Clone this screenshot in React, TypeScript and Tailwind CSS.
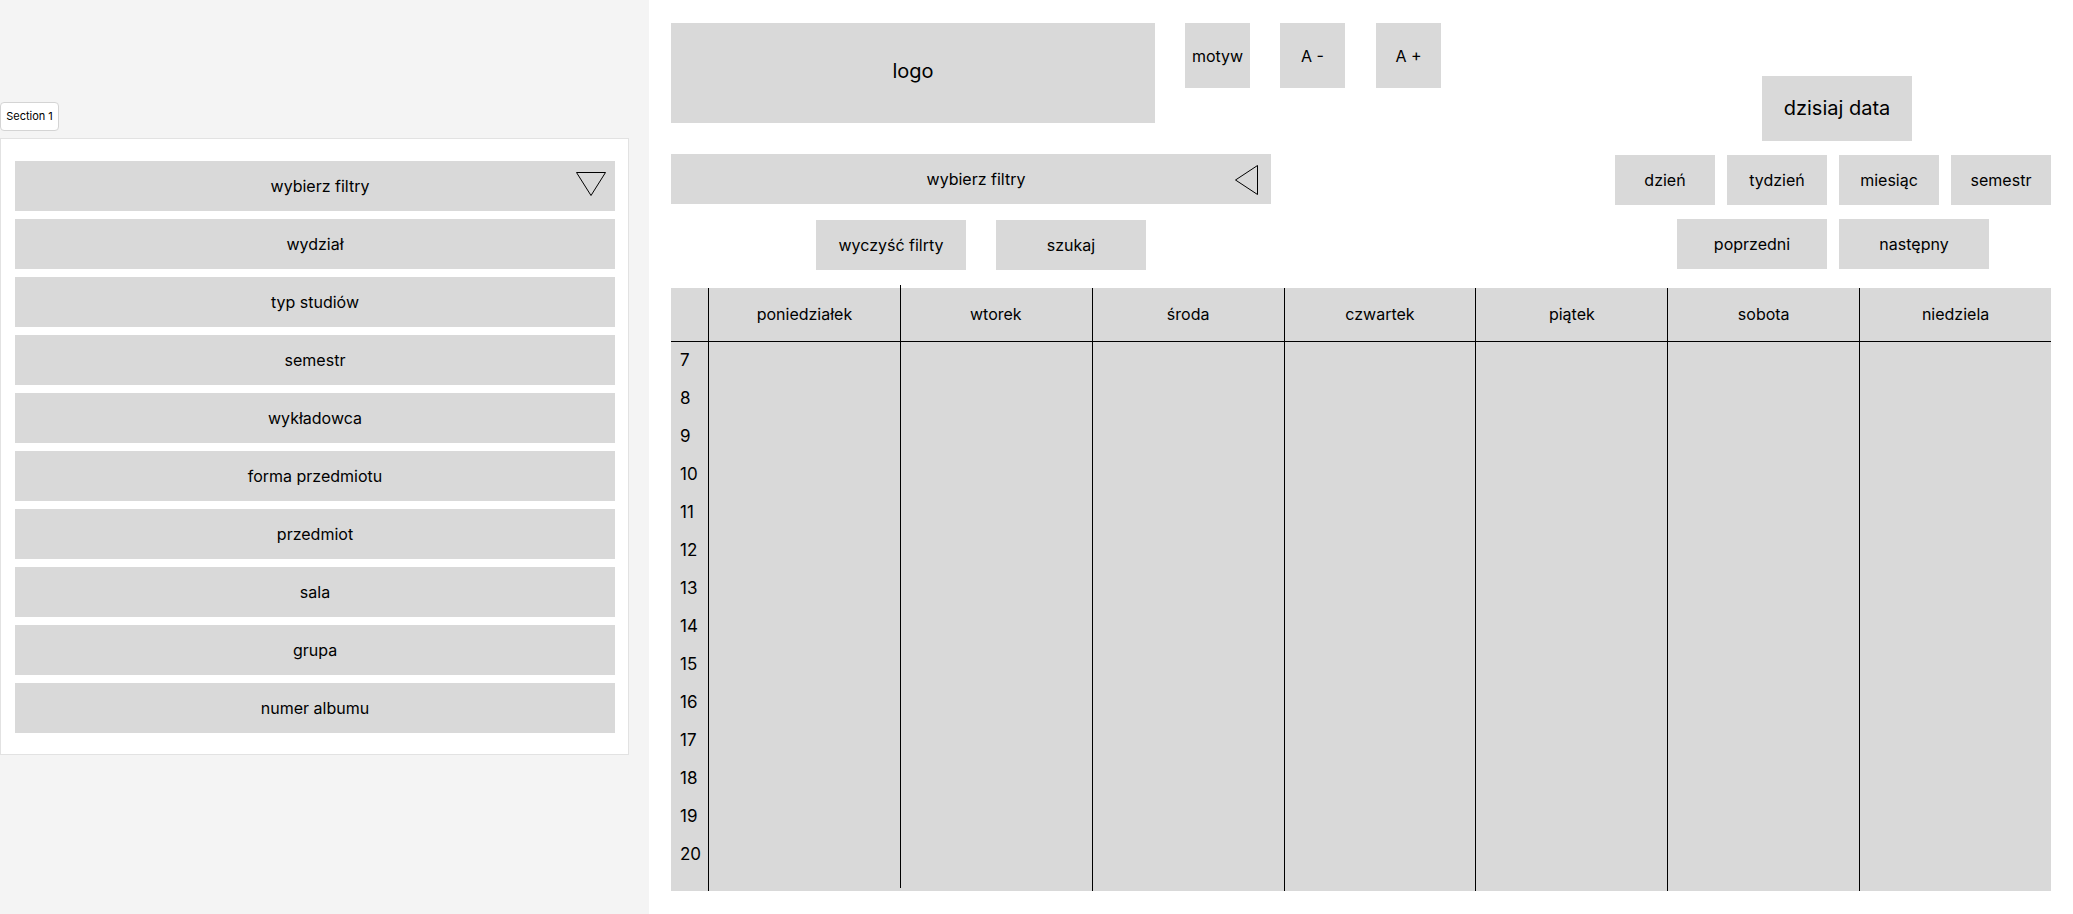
import React from 'react';

const filters = [
    'wydział',
    'typ studiów',
    'semestr',
    'wykładowca',
    'forma przedmiotu',
    'przedmiot',
    'sala',
    'grupa',
    'numer albumu',
];

const days = ['poniedziałek', 'wtorek', 'środa', 'czwartek', 'piątek', 'sobota', 'niedziela'];
const hours = [7, 8, 9, 10, 11, 12, 13, 14, 15, 16, 17, 18, 19, 20];

function TriangleDown() {
    return (
        <svg width="30" height="24" viewBox="0 0 30 24" className="block">
            <polygon points="0.5,0.5 29.5,0.5 15,23.5" fill="none" stroke="#000" strokeWidth="1" />
        </svg>
    );
}

function TriangleLeft() {
    return (
        <svg width="23" height="30" viewBox="0 0 23 30" className="block">
            <polygon points="22.5,0.5 0.5,15 22.5,29.5" fill="none" stroke="#000" strokeWidth="1" />
        </svg>
    );
}

function Sidebar() {
    return (
        <aside className="w-[649px] shrink-0 bg-[#f4f4f4] pt-[102px]">
            <div className="w-[59px] h-[29px] flex items-center justify-center bg-white border border-[#d4d4d4] rounded-[4px] text-[11px] text-black">
                Section 1
            </div>
            <div className="mt-[7px] w-[629px] bg-white border border-[#e2e2e2] pl-[14px] pr-[13px] pt-[22px] pb-[21px] flex flex-col gap-[8px]">
                <div className="relative h-[50px] bg-[#d9d9d9] flex items-center justify-center pl-[10px] text-base text-black">
                    wybierz filtry
                    <div className="absolute right-[9px] top-[11px]">
                        <TriangleDown />
                    </div>
                </div>
                {filters.map((f) => (
                    <div key={f} className="h-[50px] bg-[#d9d9d9] flex items-center justify-center text-base text-black">
                        {f}
                    </div>
                ))}
            </div>
        </aside>
    );
}

function Box({ className, children }: { className: string; children: React.ReactNode }) {
    return (
        <div className={`bg-[#d9d9d9] flex items-center justify-center text-black shrink-0 ${className}`}>
            {children}
        </div>
    );
}

function Timetable() {
    return (
        <div className="mt-[18px] h-[603px] bg-[#d9d9d9] grid grid-cols-[37px_repeat(7,1fr)] text-black">
            <div className="flex flex-col">
                <div className="h-[54px] shrink-0 border-b border-black" />
                {hours.map((h) => (
                    <div key={h} className="h-[38px] shrink-0 pl-[9px] flex items-center text-[17px]">
                        {h}
                    </div>
                ))}
            </div>
            {days.map((d, i) => (
                <div key={d} className={`relative flex flex-col ${i === 1 ? '' : 'border-l border-black'}`}>
                    {i === 1 && <div className="absolute left-0 -top-[3px] bottom-[3px] w-px bg-black" />}
                    <div className="h-[54px] shrink-0 border-b border-black flex items-center justify-center pb-[2px] text-base">
                        {d}
                    </div>
                </div>
            ))}
        </div>
    );
}

export default function App() {
    return (
        <div className="flex h-screen w-full font-['Inter',sans-serif] bg-white">
            <Sidebar />
            <main className="flex-1 pl-[22px] pr-[22px] pt-[23px]">
                <div className="flex justify-between items-start">
                    <div>
                        <div className="flex items-start gap-[30px]">
                            <Box className="w-[484px] h-[100px] pb-[4px] text-xl">logo</Box>
                            <Box className="w-[65px] h-[65px] text-base">motyw</Box>
                            <Box className="w-[65px] h-[65px] text-base">A -</Box>
                            <Box className="w-[65px] h-[65px] text-base ml-px">A +</Box>
                        </div>
                        <div className="relative mt-[31px] w-[600px] h-[50px] bg-[#d9d9d9] flex items-center justify-center pl-[10px] text-base text-black">
                            wybierz filtry
                            <div className="absolute right-[13px] top-[11px]">
                                <TriangleLeft />
                            </div>
                        </div>
                        <div className="mt-[16px] pl-[145px] flex gap-[30px]">
                            <Box className="w-[150px] h-[50px] text-base">wyczyść filrty</Box>
                            <Box className="w-[150px] h-[50px] text-base">szukaj</Box>
                        </div>
                    </div>
                    <div className="w-[436px] pt-[53px] flex flex-col items-center">
                        <Box className="w-[150px] h-[65px] pb-[2px] text-xl ml-2">dzisiaj data</Box>
                        <div className="mt-[14px] flex gap-3">
                            <Box className="w-[100px] h-[50px] text-base">dzień</Box>
                            <Box className="w-[100px] h-[50px] text-base">tydzień</Box>
                            <Box className="w-[100px] h-[50px] text-base">miesiąc</Box>
                            <Box className="w-[100px] h-[50px] text-base">semestr</Box>
                        </div>
                        <div className="mt-[14px] flex gap-3">
                            <Box className="w-[150px] h-[50px] text-base">poprzedni</Box>
                            <Box className="w-[150px] h-[50px] text-base">następny</Box>
                        </div>
                    </div>
                </div>
                <Timetable />
            </main>
        </div>
    );
}
